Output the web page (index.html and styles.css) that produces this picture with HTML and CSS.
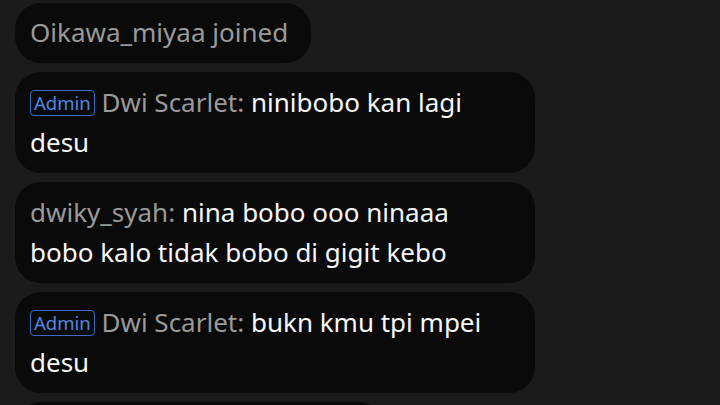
FILE: index.html
```html
<!DOCTYPE html>
<html>
<head>
<meta charset="utf-8">
<link rel="stylesheet" href="styles.css">
</head>
<body>
<div class="chat">
  <div class="bubble system"><span class="name">Oikawa_miyaa joined</span></div>
  <div class="bubble"><span class="badge">Admin</span> <span class="name">Dwi Scarlet:</span> <span class="msg">ninibobo kan lagi desu</span></div>
  <div class="bubble"><span class="name">dwiky_syah:</span> <span class="msg">nina bobo ooo ninaaa bobo kalo tidak bobo di gigit kebo</span></div>
  <div class="bubble"><span class="badge">Admin</span> <span class="name">Dwi Scarlet:</span> <span class="msg">bukn kmu tpi mpei desu</span></div>
  <div class="bubble partial"></div>
</div>
</body>
</html>
```
FILE: styles.css
```css
html, body {
  margin: 0;
  padding: 0;
  background: #1b1b1b;
  height: 405px;
  overflow: hidden;
}
.chat {
  display: flex;
  flex-direction: column;
  align-items: flex-start;
  gap: 9px;
  padding: 3px 0 0 15px;
}
.bubble {
  background: #0a0a0a;
  border-radius: 26px;
  padding: 10px 35px 11px 15px;
  max-width: 470px;
  font-family: "Noto Sans", "Open Sans", sans-serif;
  font-size: 26px;
  line-height: 40px;
  color: #f2f2f2;
}
.system {
  padding: 9px 23px 11px 15px;
}
.name {
  color: #9a9a9a;
}
.msg {
  color: #f7f7f7;
}
.badge {
  display: inline-block;
  font-size: 18.5px;
  line-height: 24px;
  padding: 0 3px;
  color: #5088e6;
  border: 1.5px solid #3d6bc0;
  border-radius: 4px;
  vertical-align: 2px;
}
.partial {
  width: 320px;
  height: 60px;
}
```
